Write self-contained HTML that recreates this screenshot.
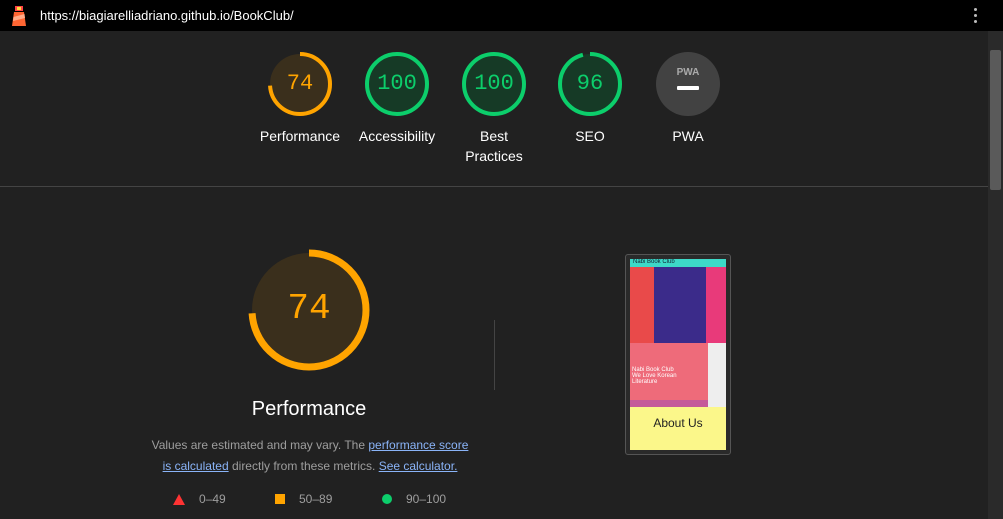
<!DOCTYPE html>
<html><head><meta charset="utf-8"><style>
*{margin:0;padding:0;box-sizing:border-box}
body{width:1003px;height:519px;background:#212121;font-family:"Liberation Sans",sans-serif;position:relative;overflow:hidden;color:#fff}
.top{position:absolute;left:0;top:0;width:1003px;height:31px;background:#000}
.url{position:absolute;left:40px;top:8px;font-size:13px;color:#fff}
.sb{position:absolute;left:988px;top:31px;width:15px;height:488px;background:#2a2a2a}
.thumb{position:absolute;left:990px;top:50px;width:11px;height:140px;background:#5a5a5a;border-radius:2px}
.g{position:absolute;width:64px;height:64px}
.g span{position:absolute;left:0;top:0;width:64px;line-height:64px;text-align:center;font-family:"Liberation Mono",monospace;font-size:22px}
.lbl{position:absolute;width:100px;text-align:center;font-size:14px;color:#fff;line-height:20px}
.hr{position:absolute;left:0;top:186px;width:988px;height:1px;background:#444}
a{color:#8ab4f8;text-decoration:underline}
</style></head><body>
<div class="top"></div>
<svg style="position:absolute;left:10px;top:5px" width="18" height="22" viewBox="0 0 18 22"><rect x="5" y="1" width="8" height="5" fill="#f44"/><rect x="7" y="2" width="4" height="3" fill="#fd4"/><polygon points="4,7 14,7 16,21 2,21" fill="#f63"/><polygon points="3.5,12 14.5,9 15,13 3,16" fill="#fa8"/></svg>
<div class="url">https://biagiarelliadriano.github.io/BookClub/</div>
<div style="position:absolute;left:974px;top:8px;width:4px">
<div style="width:3px;height:3px;background:#bbb;border-radius:50%;margin-bottom:3px"></div><div style="width:3px;height:3px;background:#bbb;border-radius:50%;margin-bottom:3px"></div><div style="width:3px;height:3px;background:#bbb;border-radius:50%"></div></div>
<div class="sb"></div><div class="thumb"></div>

<div class="g" style="left:268px;top:52px"><svg width="64" height="64"><circle cx="32" cy="32" r="30" fill="#3a2f1c"/><circle cx="32" cy="32" r="30" fill="none" stroke="#ffa400" stroke-width="4" stroke-dasharray="139.5 200" transform="rotate(-90 32 32)"/></svg><span style="color:#ffa400">74</span></div>
<div class="g" style="left:365px;top:52px"><svg width="64" height="64"><circle cx="32" cy="32" r="30" fill="#163a26" stroke="#0cce6b" stroke-width="4"/></svg><span style="color:#0cce6b">100</span></div>
<div class="g" style="left:462px;top:52px"><svg width="64" height="64"><circle cx="32" cy="32" r="30" fill="#163a26" stroke="#0cce6b" stroke-width="4"/></svg><span style="color:#0cce6b">100</span></div>
<div class="g" style="left:558px;top:52px"><svg width="64" height="64"><circle cx="32" cy="32" r="30" fill="#163a26"/><circle cx="32" cy="32" r="30" fill="none" stroke="#0cce6b" stroke-width="4" stroke-dasharray="181 200" transform="rotate(-90 32 32)"/></svg><span style="color:#0cce6b">96</span></div>
<div class="g" style="left:656px;top:52px"><svg width="64" height="64"><circle cx="32" cy="32" r="32" fill="#424242"/><text x="32" y="23" text-anchor="middle" font-family="Liberation Sans" font-weight="bold" font-size="10" fill="#aaa">PWA</text><rect x="21" y="34" width="22" height="4" rx="1" fill="#fff"/></svg></div>

<div class="lbl" style="left:250px;top:126px">Performance</div>
<div class="lbl" style="left:347px;top:126px">Accessibility</div>
<div class="lbl" style="left:444px;top:126px">Best<br>Practices</div>
<div class="lbl" style="left:540px;top:126px">SEO</div>
<div class="lbl" style="left:638px;top:126px">PWA</div>
<div class="hr"></div>

<svg style="position:absolute;left:248px;top:249px" width="122" height="122"><circle cx="61" cy="61" r="57" fill="#3a2f1c"/><circle cx="61" cy="61" r="57" fill="none" stroke="#ffa400" stroke-width="7" stroke-dasharray="265 400" transform="rotate(-90 61 61)"/></svg>
<div style="position:absolute;left:248px;top:288px;width:122px;text-align:center;font-family:'Liberation Mono',monospace;font-size:36px;color:#ffa400">74</div>
<div style="position:absolute;left:209px;top:398px;width:200px;text-align:center;font-size:20px">Performance</div>
<div style="position:absolute;left:140px;top:435px;width:340px;text-align:center;font-size:12px;line-height:21px;color:#9e9e9e">Values are estimated and may vary. The <a>performance score<br>is calculated</a> directly from these metrics. <a>See calculator.</a></div>
<svg style="position:absolute;left:173px;top:494px" width="12" height="11"><polygon points="6,0 12,11 0,11" fill="#f33"/></svg>
<div style="position:absolute;left:199px;top:492px;font-size:12px;color:#9e9e9e">0–49</div>
<div style="position:absolute;left:275px;top:494px;width:10px;height:10px;background:#ffa400"></div>
<div style="position:absolute;left:299px;top:492px;font-size:12px;color:#9e9e9e">50–89</div>
<div style="position:absolute;left:382px;top:494px;width:10px;height:10px;border-radius:50%;background:#0cce6b"></div>
<div style="position:absolute;left:406px;top:492px;font-size:12px;color:#9e9e9e">90–100</div>

<div style="position:absolute;left:494px;top:320px;width:1px;height:70px;background:#444"></div>

<div style="position:absolute;left:625px;top:254px;width:106px;height:201px;border:1px solid #555;border-radius:3px;background:#2a2a2a"></div>
<div style="position:absolute;left:630px;top:259px;width:96px;height:191px;overflow:hidden;background:#f06">
<div style="height:8px;background:#3dd9c8;font-size:6px;color:#123;padding-left:3px">Nabi Book Club</div>
<div style="position:absolute;left:0;top:8px;width:24px;height:76px;background:#e94a4a"></div>
<div style="position:absolute;left:24px;top:8px;width:52px;height:76px;background:#3b2b8a"></div>
<div style="position:absolute;left:76px;top:8px;width:20px;height:76px;background:#e83a7a"></div>
<div style="position:absolute;left:0;top:84px;width:96px;height:64px;background:#c55a9a"></div>
<div style="position:absolute;left:0;top:84px;width:78px;height:57px;background:#ee6b7a;font-size:6px;color:#fff;padding:24px 2px 0">Nabi Book Club<br>We Love Korean<br>Literature</div>
<div style="position:absolute;left:78px;top:84px;width:18px;height:64px;background:#eee"></div>
<div style="position:absolute;left:0;top:148px;width:96px;height:43px;background:#fbf78a;color:#222;text-align:center;font-size:12px;padding-top:9px">About Us</div>
</div>
</body></html>
